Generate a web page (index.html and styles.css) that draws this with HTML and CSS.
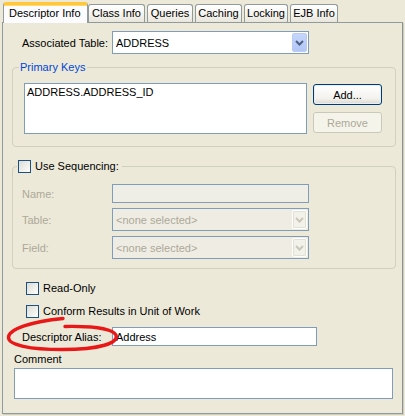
FILE: index.html
```html
<!DOCTYPE html>
<html>
<head>
<meta charset="utf-8">
<link rel="stylesheet" href="styles.css">
</head>
<body>
<div class="tabs">
  <div class="tab active w-desc">Descriptor Info</div>
  <div class="tab w-class">Class Info</div>
  <div class="tab w-queries">Queries</div>
  <div class="tab w-caching">Caching</div>
  <div class="tab w-locking">Locking</div>
  <div class="tab w-ejb">EJB Info</div>
</div>
<div class="panel">
  <div class="form-row assoc">
    <span class="lbl">Associated Table:</span>
    <div class="combo">
      <span class="combo-val">ADDRESS</span>
      <span class="combo-btn"><svg width="9" height="6" viewBox="0 0 9 6"><path d="M1 1 L4.5 4.5 L8 1" fill="none" stroke="#4D6185" stroke-width="2"/></svg></span>
    </div>
  </div>

  <fieldset class="group pk">
    <legend class="pk-legend">Primary Keys</legend>
    <div class="pk-body">
      <div class="list">ADDRESS.ADDRESS_ID</div>
      <div class="btn-col">
        <div class="xp-btn default">Add...</div>
        <div class="xp-btn disabled">Remove</div>
      </div>
    </div>
  </fieldset>

  <fieldset class="group seq">
    <legend class="seq-legend"><span class="cb"></span><span>Use Sequencing:</span></legend>
    <div class="seq-rows">
      <div class="form-row">
        <span class="lbl dis">Name:</span>
        <div class="field dis-field name-field"></div>
      </div>
      <div class="form-row">
        <span class="lbl dis">Table:</span>
        <div class="combo dis-combo">
          <span class="combo-val">&lt;none selected&gt;</span>
          <span class="combo-btn dis-btn"><svg width="9" height="6" viewBox="0 0 9 6"><path d="M1 1 L4.5 4.5 L8 1" fill="none" stroke="#C9C7BA" stroke-width="2"/></svg></span>
        </div>
      </div>
      <div class="form-row">
        <span class="lbl dis">Field:</span>
        <div class="combo dis-combo">
          <span class="combo-val">&lt;none selected&gt;</span>
          <span class="combo-btn dis-btn"><svg width="9" height="6" viewBox="0 0 9 6"><path d="M1 1 L4.5 4.5 L8 1" fill="none" stroke="#C9C7BA" stroke-width="2"/></svg></span>
        </div>
      </div>
    </div>
  </fieldset>

  <div class="check-row first"><span class="cb"></span><span>Read-Only</span></div>
  <div class="check-row second"><span class="cb"></span><span>Conform Results in Unit of Work</span></div>

  <div class="form-row alias">
    <span class="lbl">Descriptor Alias:</span>
    <div class="field alias-field">Address</div>
    <svg class="ellipse" width="120" height="40" viewBox="5 316 120 40">
      <path d="M65 327.5 C88 327 112 329 116 336 C119 344 100 350.5 62 350.5 C30 350.5 8.5 346 8.5 338.5 C8.5 330 32 322.5 63 319.5" fill="none" stroke="#E81818" stroke-width="3.4" stroke-linecap="round"/>
    </svg>
  </div>

  <div class="comment-lbl">Comment</div>
  <div class="comment-box"></div>
</div>
</body>
</html>
```

FILE: styles.css
```css
* { box-sizing: border-box; }
html, body { margin: 0; padding: 0; }
body {
  width: 405px;
  height: 416px;
  background: #ECE9D8;
  font-family: "Liberation Sans", Arial, sans-serif;
  font-size: 11px;
  color: #000;
  overflow: hidden;
}

/* Tabs */
.tabs {
  display: flex;
  align-items: flex-end;
  height: 22px;
  padding-left: 3px;
}
.tab {
  height: 18px;
  border: 1px solid #919B9C;
  border-bottom: none;
  border-radius: 3px 3px 0 0;
  background: linear-gradient(#FFFFFF, #F3F2EC 60%, #E8E6DC);
  display: flex;
  align-items: center;
  justify-content: center;
  line-height: 13px;
  white-space: nowrap;
  margin-right: 2px;
}
.tab.active {
  height: 21px;
  margin-bottom: -1px;
  position: relative;
  z-index: 1;
  background: #FCFCFE;
  border-top: 3px solid #FFC83C;
  box-shadow: inset 0 1px 0 #FFD86A;
  border-left-color: #919B9C;
  margin-right: 0;
  padding-bottom: 2px;
  justify-content: flex-start;
  padding-left: 5px;
}
.w-desc { width: 85px; }
.w-class { width: 57px; }
.w-queries { width: 46px; }
.w-caching { width: 47px; }
.w-locking { width: 44px; }
.w-ejb { width: 48px; }

/* Panel */
.panel {
  margin-left: 2px;
  width: 401px;
  height: 392px;
  border: 1px solid #919B9C;
  border-right-color: #8A9293;
  box-shadow: 1px 1px 0 #D0CEBF;
  background: #ECE9D8;
}

.form-row {
  display: flex;
  align-items: center;
  position: relative;
}
.lbl {
  width: 90px;
  flex: none;
  white-space: nowrap;
}
.lbl.dis { color: #ACA899; }

.assoc {
  margin-top: 8px;
  padding-left: 19px;
}

.combo {
  width: 197px;
  height: 23px;
  border: 1px solid #7F9DB9;
  background: #FFFFFF;
  display: flex;
  align-items: center;
  padding: 1px 1px 1px 3px;
}
.combo-val { flex: 1; white-space: nowrap; }
.combo-btn {
  width: 15px;
  height: 19px;
  border-radius: 2px;
  background: linear-gradient(#C6D6FC, #B2C7F6);
  border: 1px solid #B9CBF5;
  display: flex;
  align-items: center;
  justify-content: center;
}
.dis-combo { background: #EFEDE3; color: #ACA899; }
.combo-btn.dis-btn {
  background: #F3F2EA;
  border: 1px solid #FFFFFF;
  box-shadow: 0 0 0 1px #E3E1D6 inset;
}

/* Group boxes */
.group {
  margin: 0 7px 0 9px;
  width: 384px;
  border: 1px solid #D0D0BF;
  border-radius: 4px;
  min-width: 0;
}
.pk {
  margin-top: 7px;
  padding: 9px 11px 12px 11px;
}
.pk-legend {
  color: #0046D5;
  padding: 0 2px 0 1px;
  margin-left: -5px;
  line-height: 13px;
}
.pk-body {
  display: flex;
  align-items: flex-start;
}
.list {
  width: 283px;
  height: 51px;
  border: 1px solid #7F9DB9;
  background: #FFFFFF;
  padding: 2px 0 0 2px;
  line-height: 13px;
}
.btn-col {
  margin-left: 6px;
  margin-top: 1px;
  display: flex;
  flex-direction: column;
  gap: 7px;
}
.xp-btn {
  width: 69px;
  height: 21px;
  border-radius: 3px;
  display: flex;
  align-items: center;
  justify-content: center;
}
.xp-btn.default {
  border: 1px solid #003C74;
  background: linear-gradient(#FFFFFF, #F3F2EE 70%, #DCD9CC);
  box-shadow: inset 0 0 0 1px #E6EEFC;
}
.xp-btn.disabled {
  border: 1px solid #CAC8BB;
  background: #F5F4EA;
  color: #ACA899;
}

.seq {
  margin-top: 13px;
  padding: 11px 0 9px 9px;
}
.seq-legend {
  display: flex;
  align-items: center;
  padding: 0 3px 0 1px;
  margin-left: -5px;
  line-height: 13px;
}
.seq-legend .cb { margin-right: 4px; }
.seq-rows {
  display: flex;
  flex-direction: column;
  gap: 5px;
}
.field {
  height: 19px;
  border: 1px solid #7F9DB9;
  background: #FFFFFF;
  display: flex;
  align-items: center;
  padding-left: 3px;
}
.name-field { width: 197px; background: #EEEDE6; }

/* Checkboxes */
.cb {
  width: 13px;
  height: 13px;
  flex: none;
  border: 1px solid #1C5180;
  background: linear-gradient(135deg, #DCDCD7, #F7F7F4 80%, #FFFFFF);
  display: inline-block;
}
.check-row {
  display: flex;
  align-items: center;
  padding-left: 23px;
  height: 13px;
  line-height: 13px;
}
.check-row .cb { margin-right: 4px; }
.check-row.first { margin-top: 13px; }
.check-row.second { margin-top: 10px; }

.alias {
  margin-top: 9px;
  padding-left: 19px;
}
.alias-field { width: 205px; }
.ellipse {
  position: absolute;
  left: 2px;
  top: -12px;
  pointer-events: none;
}

.comment-lbl {
  margin-top: 7px;
  padding-left: 11px;
  line-height: 13px;
}
.comment-box {
  margin-top: 2px;
  margin-left: 11px;
  width: 379px;
  height: 31px;
  border: 1px solid #7F9DB9;
  background: #FFFFFF;
}
```
